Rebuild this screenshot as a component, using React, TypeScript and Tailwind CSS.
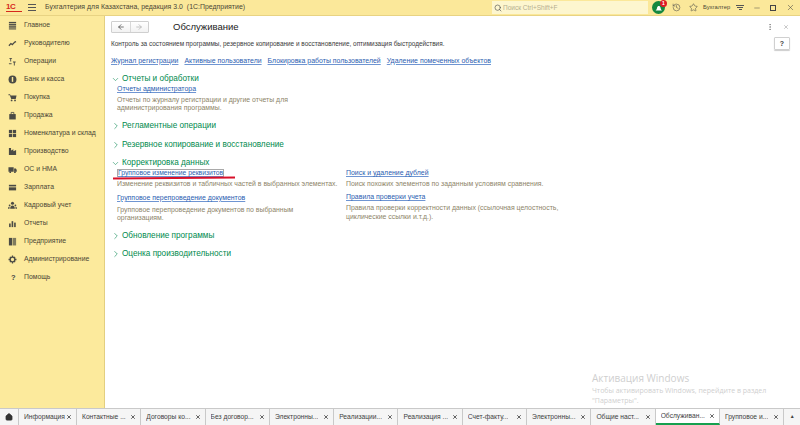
import React from "react";
import { X, ChevronRight, ChevronDown, Search, History, Star, Minus, ArrowLeft, ArrowRight, EllipsisVertical, Home } from "lucide-react";

const ICON = "#4b4b45";

const menuIcons: Record<string, React.ReactNode> = {
  main: (
    <>
      <rect x="1" y="1" width="8" height="1.6" />
      <rect x="1" y="3.4" width="8" height="1.6" />
      <rect x="1" y="5.8" width="8" height="1.6" />
      <rect x="1" y="8.2" width="8" height="1.2" />
    </>
  ),
  chart: <path d="M1 7.5 3.2 5l1.6 1.2L7.5 3.4 9 3" fill="none" stroke={ICON} strokeWidth="1.4" />,
  ops: (
    <>
      <path d="M1.5 1h3v1h-1v3h-1V2h-1z" />
      <path d="M5.5 5h3v1h-1v3.5h-1V6h-1z" />
      <path d="M1 7h3v1H1z" />
    </>
  ),
  bank: (
    <>
      <circle cx="5" cy="5" r="4.4" />
      <rect x="4.2" y="2.2" width="1.6" height="5.4" fill="#fcea9c" />
    </>
  ),
  cart: (
    <>
      <path d="M.5 1.5h1.8l.5 1.2h6.7L8.6 6.6H3.6L2 2.4H.5z" />
      <circle cx="4" cy="8.2" r="1" />
      <circle cx="7.8" cy="8.2" r="1" />
    </>
  ),
  bag: (
    <>
      <rect x="1.4" y="3.4" width="7.2" height="6" />
      <path d="M3.5 3.4V1.6h3v1.8" fill="none" stroke={ICON} strokeWidth="0.9" />
    </>
  ),
  grid: (
    <>
      <rect x="1" y="1" width="3.6" height="3.6" />
      <rect x="5.4" y="1" width="3.6" height="3.6" />
      <rect x="1" y="5.4" width="3.6" height="3.6" />
      <rect x="5.4" y="5.4" width="3.6" height="3.6" />
    </>
  ),
  factory: <path d="M1 1h2.4v3L6 2.6v2L9 3.4V9H1z" />,
  truck: (
    <>
      <path d="M.5 2.5h5.8v5H.5zM6.8 4h2l.9 1.6v1.9H6.8z" />
      <circle cx="2.5" cy="8" r="1" />
      <circle cx="7.7" cy="8" r="1" />
    </>
  ),
  card: (
    <>
      <rect x="1" y="2" width="8" height="1.8" />
      <rect x="1" y="4.8" width="8" height="3.4" />
    </>
  ),
  people: (
    <>
      <circle cx="5" cy="2.6" r="1.7" />
      <path d="M2.4 8.6c0-2.4 1.2-3.6 2.6-3.6s2.6 1.2 2.6 3.6z" />
      <circle cx="1.8" cy="4.8" r="1" />
      <circle cx="8.2" cy="4.8" r="1" />
      <path d="M0 8.6c0-1.6.7-2.6 1.7-2.6v2.6zM10 8.6c0-1.6-.7-2.6-1.7-2.6v2.6z" />
    </>
  ),
  bars: (
    <>
      <rect x="1.2" y="5" width="1.8" height="4" />
      <rect x="4" y="2.4" width="1.8" height="6.6" />
      <rect x="6.8" y="4" width="1.8" height="5" />
    </>
  ),
  building: (
    <>
      <rect x="1" y="1" width="3.6" height="8.4" />
      <rect x="5.2" y="1" width="3.8" height="8.4" opacity="0.7" />
    </>
  ),
  gear: (
    <>
      <circle cx="5" cy="5" r="2.6" fill="none" stroke={ICON} strokeWidth="1.5" />
      <path d="M4.3.6h1.4v1.6H4.3zM4.3 7.8h1.4v1.6H4.3zM.6 4.3h1.6v1.4H.6zM7.8 4.3h1.6v1.4H7.8z" />
      <path d="m1.6 2.6 1-1 1 1-1 1zM6.4 7.4l1-1 1 1-1 1zM7.4 1.6l1 1-1 1-1-1zM2.6 6.4l1 1-1 1-1-1z" />
    </>
  ),
};

const menu: [string, string | null][] = [
  ["Главное", "main"],
  ["Руководителю", "chart"],
  ["Операции", "ops"],
  ["Банк и касса", "bank"],
  ["Покупка", "cart"],
  ["Продажа", "bag"],
  ["Номенклатура и склад", "grid"],
  ["Производство", "factory"],
  ["ОС и НМА", "truck"],
  ["Зарплата", "card"],
  ["Кадровый учет", "people"],
  ["Отчеты", "bars"],
  ["Предприятие", "building"],
  ["Администрирование", "gear"],
  ["Помощь", null],
];

const tabs = [
  "Информация",
  "Контактные ...",
  "Договоры ко...",
  "Без договор...",
  "Электронны...",
  "Реализации...",
  "Реализация ...",
  "Счет-факту...",
  "Электронны...",
  "Общие наст...",
  "Обслуживан...",
  "Групповое и...",
];

const Section = ({ title, open, className }: { title: string; open?: boolean; className?: string }) => (
  <div className={`flex h-[10px] items-center text-[8.2px] leading-none text-[#008a4e] ${className ?? ""}`}>
    <span className="flex w-[11px] justify-start">
      {open ? (
        <ChevronDown size={9} strokeWidth={1.5} className="text-[#0f8a55]" />
      ) : (
        <ChevronRight size={10} strokeWidth={1.5} className="text-[#0f8a55]" />
      )}
    </span>
    <span>{title}</span>
  </div>
);

const Link = ({ children, className }: { children: React.ReactNode; className?: string }) => (
  <span className={`text-[6.95px] leading-[9px] text-[#2a5db0] underline decoration-[#6f95d2] ${className ?? ""}`}>
    {children}
  </span>
);

const Hint = ({ children, className }: { children: React.ReactNode; className?: string }) => (
  <p className={`text-[6.9px] leading-[8.2px] text-[#8d8468] ${className ?? ""}`}>{children}</p>
);

export default function App() {
  return (
    <div className="relative flex h-[425px] w-[800px] flex-col overflow-hidden bg-white font-['Liberation_Sans',sans-serif]">
      {/* header */}
      <header className="flex h-[16px] shrink-0 items-center border-b border-[#e8d383] bg-[#fbe89a] pl-[6px] text-[#444]">
        <span className="w-[16px] border-b border-[#d6281c] text-[8px] font-bold leading-[8px] tracking-[-0.5px] text-[#d6281c]">1C</span>
        <span className="ml-[6px] flex h-[7px] w-[8px] flex-col justify-between">
          <i className="h-px bg-[#555]" />
          <i className="h-px bg-[#555]" />
          <i className="h-px bg-[#555]" />
        </span>
        <span className="ml-[9px] w-[447px] text-[6.9px] tracking-[0.03px] text-[#4a4636]">
          Бухгалтерия для Казахстана, редакция 3.0&nbsp; (1С:Предприятие)
        </span>
        <div className="flex h-[13px] w-[156px] items-center gap-[1px] bg-[#fdf6cf] pl-[2px] text-[6.5px] text-[#b5ae90]">
          <Search size={8} strokeWidth={1.8} className="text-[#444]" />
          Поиск Ctrl+Shift+F
        </div>
        <div className="relative ml-[4px] h-[13px] w-[13px] rounded-full bg-[#14883f]">
          <svg viewBox="0 0 13 13" className="h-[13px] w-[13px]">
            <path d="M3.5 9.5c1-.6 1.4-1.6 1.6-3 .2-1 .9-1.6 1.7-1.6s1.5.6 1.7 1.6c.2 1.4.6 2.4 1.5 3z" fill="#fff" />
          </svg>
          <span className="absolute right-[-2px] top-[-1px] flex h-[7px] w-[7px] items-center justify-center rounded-full bg-[#e01b24] text-[5px] font-bold leading-none text-white">
            1
          </span>
        </div>
        <History size={9} strokeWidth={1.4} className="ml-[7px]" />
        <Star size={9} strokeWidth={1.4} className="ml-[8px]" />
        <span className="ml-[5px] w-[33px] text-[5.8px] text-[#4a4636]">Бухгалтер</span>
        <span className="flex w-[8px] flex-col items-center gap-[1px]">
          <i className="h-px w-[8px] bg-[#555]" />
          <i className="h-px w-[6px] bg-[#555]" />
          <i className="h-px w-[3px] bg-[#555]" />
        </span>
        <Minus size={8} strokeWidth={1.4} className="ml-[9px]" />
        <span className="ml-[9px] h-[6px] w-[6px] border border-[#444]" />
        <X size={9} strokeWidth={1.4} className="ml-[10px]" />
      </header>

      <div className="flex min-h-0 flex-1">
        {/* sidebar */}
        <aside className="w-[105px] shrink-0 border-r border-[#e3cf80] bg-[#fcea9c] pt-[0.5px]">
          {menu.map(([name, icon]) => (
            <div key={name} className="flex h-[18px] items-center pl-[8px] text-[6.85px] text-[#4a4636]">
              <span className="flex w-[16px] shrink-0 items-center">
                {icon ? (
                  <svg viewBox="0 0 10 10" className="h-[9px] w-[9px]" fill={ICON}>
                    {menuIcons[icon]}
                  </svg>
                ) : (
                  <span className="pl-[3px] text-[7.5px] font-bold leading-none text-[#444]">?</span>
                )}
              </span>
              {name}
            </div>
          ))}
        </aside>

        {/* content */}
        <main className="relative min-w-0 flex-1 pl-[6px] pt-[4px]">
          <div className="flex h-[13px] items-center">
            <div className="flex h-[12px] w-[38px] rounded-[1px] border border-[#cfcfcf] bg-gradient-to-b from-white to-[#f2f2f2]">
              <span className="flex flex-1 items-center justify-center border-r border-[#d8d8d8]">
                <ArrowLeft size={8} strokeWidth={2} className="text-[#333]" />
              </span>
              <span className="flex flex-1 items-center justify-center">
                <ArrowRight size={8} strokeWidth={2} className="text-[#aaa]" />
              </span>
            </div>
            <h1 className="ml-[24px] text-[9.5px] leading-none text-[#222]">Обслуживание</h1>
            <div className="ml-auto mr-[11px] flex items-center gap-[9px] text-[#777]">
              <EllipsisVertical size={8} strokeWidth={2} />
              <X size={6} strokeWidth={1.6} />
            </div>
          </div>

          <div className="flex h-[20px] items-start justify-between pr-[10px] pt-[4px]">
            <p className="pt-[3px] text-[6.43px] leading-[8px] text-[#3a3a3a]">
              Контроль за состоянием программы, резервное копирование и восстановление, оптимизация быстродействия.
            </p>
            <span className="flex h-[13px] w-[16px] items-center justify-center rounded-[1px] border border-[#d0d0d0] text-[7px] font-bold leading-none text-[#444] shadow-[0_1px_1px_#ccc]">
              ?
            </span>
          </div>

          <div className="mt-[2px] flex h-[10px] items-center gap-[6px]">
            <Link>Журнал регистрации</Link>
            <Link>Активные пользователи</Link>
            <Link>Блокировка работы пользователей</Link>
            <Link>Удаление помеченных объектов</Link>
          </div>

          <Section title="Отчеты и обработки" open className="mt-[9px]" />
          <div className="pl-[6px]">
            <Link className="block">Отчеты администратора</Link>
            <Hint className="mt-[2.5px]">
              Отчеты по журналу регистрации и другие отчеты для
              <br />
              администрирования программы.
            </Hint>
          </div>

          <Section title="Регламентные операции" className="mt-[9.5px]" />
          <Section title="Резервное копирование и восстановление" className="mt-[8.5px]" />
          <Section title="Корректировка данных" open className="mt-[8.5px]" />

          <div className="grid grid-cols-[229px_250px] pl-[6px]">
            <div>
              {/* focused link: dotted frame instead of the normal underline row height */}
              <div className="mt-[1px] h-[8px] w-fit border border-[#a9a9a9] text-[6.75px] leading-[6px] text-[#2a5db0] underline decoration-[#6f95d2]">
                Групповое изменение реквизитов
              </div>
              <Hint className="mt-[2.5px]">Изменение реквизитов и табличных частей в выбранных элементах.</Hint>
              <Link className="mt-[4.8px] block">Групповое перепроведение документов</Link>
              <Hint className="mt-[4px]">
                Групповое перепроведение документов по выбранным
                <br />
                организациям.
              </Hint>
            </div>
            <div>
              <Link className="block">Поиск и удаление дублей</Link>
              <Hint className="mt-[2.5px]">Поиск похожих элементов по заданным условиям сравнения.</Hint>
              <Link className="mt-[4.3px] block">Правила проверки учета</Link>
              <Hint className="mt-[3px]">
                Правила проверки корректности данных (ссылочная целостность,
                <br />
                циклические ссылки и.т.д.).
              </Hint>
            </div>
          </div>

          <Section title="Обновление программы" className="mt-[8.6px]" />
          <Section title="Оценка производительности" className="mt-[8px]" />

          {/* red annotation under the link */}
          <div className="absolute left-[8px] top-[160.5px] h-[2px] w-[122px] -rotate-[0.5deg] bg-[#d8102a]" />

          {/* windows watermark */}
          <div className="absolute left-[487px] top-[356px] font-['Open_Sans',sans-serif] text-[#cfcfcf]">
            <div className="text-[10px] leading-[13px]">Активация Windows</div>
            <div className="mt-[1px] text-[7px] leading-[9.5px]">
              Чтобы активировать Windows, перейдите в раздел
              <br />
              "Параметры".
            </div>
          </div>
        </main>
      </div>

      {/* tab bar */}
      <footer className="flex h-[17px] shrink-0 border-t border-[#c9c9c9] bg-[#f5f5f5] text-[6.7px] text-[#3f3f3f]">
        <div className="flex w-[19px] items-center justify-center border-r border-[#c9c9c9]">
          <Home size={8} strokeWidth={2.4} className="fill-[#333] text-[#333]" />
        </div>
        {tabs.map((t, i) => (
          <div
            key={i}
            className={`flex shrink-0 items-center justify-between border-r border-[#c9c9c9] pl-[5px] pr-[4px] ${
              i === 0 ? "w-[58px]" : "w-[64.3px]"
            } ${t === "Обслуживан..." ? "border-b-2 border-b-[#17a04f] bg-white" : ""}`}
          >
            <span className="truncate">{t}</span>
            <X size={6} strokeWidth={3} className="shrink-0 text-[#333]" />
          </div>
        ))}
        <div className="flex flex-1 items-center justify-center text-[5px] text-[#444]">▲</div>
      </footer>
    </div>
  );
}
